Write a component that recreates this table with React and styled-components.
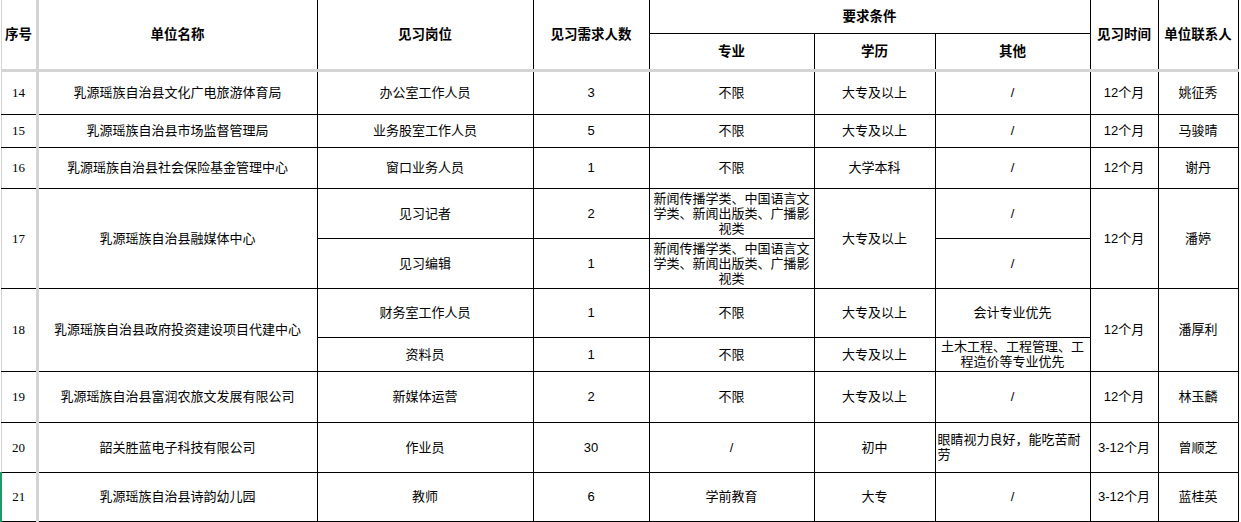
import React from "react";
import styled, { createGlobalStyle } from "styled-components";

const GlobalStyle = createGlobalStyle`
  body {
    margin: 0;
    background: #fff;
    font-family: "Liberation Sans", "Noto Sans CJK SC", sans-serif;
  }
`;

const Sheet = styled.table`
  width: 1237px;
  table-layout: fixed;
  border-collapse: collapse;
  font-family: "Liberation Sans", "Noto Sans CJK SC", sans-serif;
  font-size: 13px;
  line-height: 15px;
  color: #000;
`;

const Row = styled.tr`
  height: ${({ $h }) => $h}px;
`;

const Head = styled.th`
  border: 1px solid #000;
  border-top: none;
  border-bottom: ${({ $freeze }) => ($freeze ? "3px solid #d4d4d4" : "1px solid #000")};
  font-weight: 700;
  font-size: 13.5px;
  text-align: center;
  vertical-align: middle;
  padding: 0 2px;
  white-space: nowrap;
`;

const IndexHead = styled(Head)`
  border-left: 1px solid #d4d4d4;
  border-right: 3px solid #d4d4d4;
`;

const Cell = styled.td`
  border: 1px solid #000;
  text-align: ${({ $align }) => $align || "center"};
  vertical-align: middle;
  padding: 0 3px;
  overflow: hidden;
`;

const IndexCell = styled(Cell)`
  border-left: ${({ $active }) => ($active ? "2px solid #1f9a64" : "1px solid #d4d4d4")};
  border-right: 3px solid #d4d4d4;
  font-family: "Liberation Serif", "Noto Sans CJK SC", serif;
`;

const WrapCell = styled(Cell)`
  padding: 0 2px;
  word-break: break-all;
`;

const widths = [36, 280, 216, 116, 165, 121, 155, 68, 80];

export default function App() {
  return (
    <>
      <GlobalStyle />
      <Sheet>
        <colgroup>
          {widths.map((w, i) => (
            <col key={i} style={{ width: w }} />
          ))}
        </colgroup>
        <thead>
          <Row $h={33}>
            <IndexHead rowSpan={2} $freeze>序号</IndexHead>
            <Head rowSpan={2} $freeze>单位名称</Head>
            <Head rowSpan={2} $freeze>见习岗位</Head>
            <Head rowSpan={2} $freeze>见习需求人数</Head>
            <Head colSpan={3}>要求条件</Head>
            <Head rowSpan={2} $freeze>见习时间</Head>
            <Head rowSpan={2} $freeze>单位联系人</Head>
          </Row>
          <Row $h={37}>
            <Head $freeze>专业</Head>
            <Head $freeze>学历</Head>
            <Head $freeze>其他</Head>
          </Row>
        </thead>
        <tbody>
          <Row $h={44}>
            <IndexCell>14</IndexCell>
            <Cell>乳源瑶族自治县文化广电旅游体育局</Cell>
            <Cell>办公室工作人员</Cell>
            <Cell>3</Cell>
            <Cell>不限</Cell>
            <Cell>大专及以上</Cell>
            <Cell>/</Cell>
            <Cell>12个月</Cell>
            <Cell>姚征秀</Cell>
          </Row>
          <Row $h={33}>
            <IndexCell>15</IndexCell>
            <Cell>乳源瑶族自治县市场监督管理局</Cell>
            <Cell>业务股室工作人员</Cell>
            <Cell>5</Cell>
            <Cell>不限</Cell>
            <Cell>大专及以上</Cell>
            <Cell>/</Cell>
            <Cell>12个月</Cell>
            <Cell>马骏晴</Cell>
          </Row>
          <Row $h={41}>
            <IndexCell>16</IndexCell>
            <Cell>乳源瑶族自治县社会保险基金管理中心</Cell>
            <Cell>窗口业务人员</Cell>
            <Cell>1</Cell>
            <Cell>不限</Cell>
            <Cell>大学本科</Cell>
            <Cell>/</Cell>
            <Cell>12个月</Cell>
            <Cell>谢丹</Cell>
          </Row>
          <Row $h={50}>
            <IndexCell rowSpan={2}>17</IndexCell>
            <Cell rowSpan={2}>乳源瑶族自治县融媒体中心</Cell>
            <Cell>见习记者</Cell>
            <Cell>2</Cell>
            <WrapCell>新闻传播学类、中国语言文学类、新闻出版类、广播影视类</WrapCell>
            <Cell rowSpan={2}>大专及以上</Cell>
            <Cell>/</Cell>
            <Cell rowSpan={2}>12个月</Cell>
            <Cell rowSpan={2}>潘婷</Cell>
          </Row>
          <Row $h={50}>
            <Cell>见习编辑</Cell>
            <Cell>1</Cell>
            <WrapCell>新闻传播学类、中国语言文学类、新闻出版类、广播影视类</WrapCell>
            <Cell>/</Cell>
          </Row>
          <Row $h={49}>
            <IndexCell rowSpan={2}>18</IndexCell>
            <Cell rowSpan={2}>乳源瑶族自治县政府投资建设项目代建中心</Cell>
            <Cell>财务室工作人员</Cell>
            <Cell>1</Cell>
            <Cell>不限</Cell>
            <Cell>大专及以上</Cell>
            <Cell>会计专业优先</Cell>
            <Cell rowSpan={2}>12个月</Cell>
            <Cell rowSpan={2}>潘厚利</Cell>
          </Row>
          <Row $h={34}>
            <Cell>资料员</Cell>
            <Cell>1</Cell>
            <Cell>不限</Cell>
            <Cell>大专及以上</Cell>
            <WrapCell>土木工程、工程管理、工程造价等专业优先</WrapCell>
          </Row>
          <Row $h={51}>
            <IndexCell>19</IndexCell>
            <Cell>乳源瑶族自治县富润农旅文发展有限公司</Cell>
            <Cell>新媒体运营</Cell>
            <Cell>2</Cell>
            <Cell>不限</Cell>
            <Cell>大专及以上</Cell>
            <Cell>/</Cell>
            <Cell>12个月</Cell>
            <Cell>林玉麟</Cell>
          </Row>
          <Row $h={50}>
            <IndexCell>20</IndexCell>
            <Cell>韶关胜蓝电子科技有限公司</Cell>
            <Cell>作业员</Cell>
            <Cell>30</Cell>
            <Cell>/</Cell>
            <Cell>初中</Cell>
            <WrapCell $align="left">眼睛视力良好，能吃苦耐劳</WrapCell>
            <Cell>3-12个月</Cell>
            <Cell>曾顺芝</Cell>
          </Row>
          <Row $h={49}>
            <IndexCell $active>21</IndexCell>
            <Cell>乳源瑶族自治县诗韵幼儿园</Cell>
            <Cell>教师</Cell>
            <Cell>6</Cell>
            <Cell>学前教育</Cell>
            <Cell>大专</Cell>
            <Cell>/</Cell>
            <Cell>3-12个月</Cell>
            <Cell>蓝桂英</Cell>
          </Row>
        </tbody>
      </Sheet>
    </>
  );
}
